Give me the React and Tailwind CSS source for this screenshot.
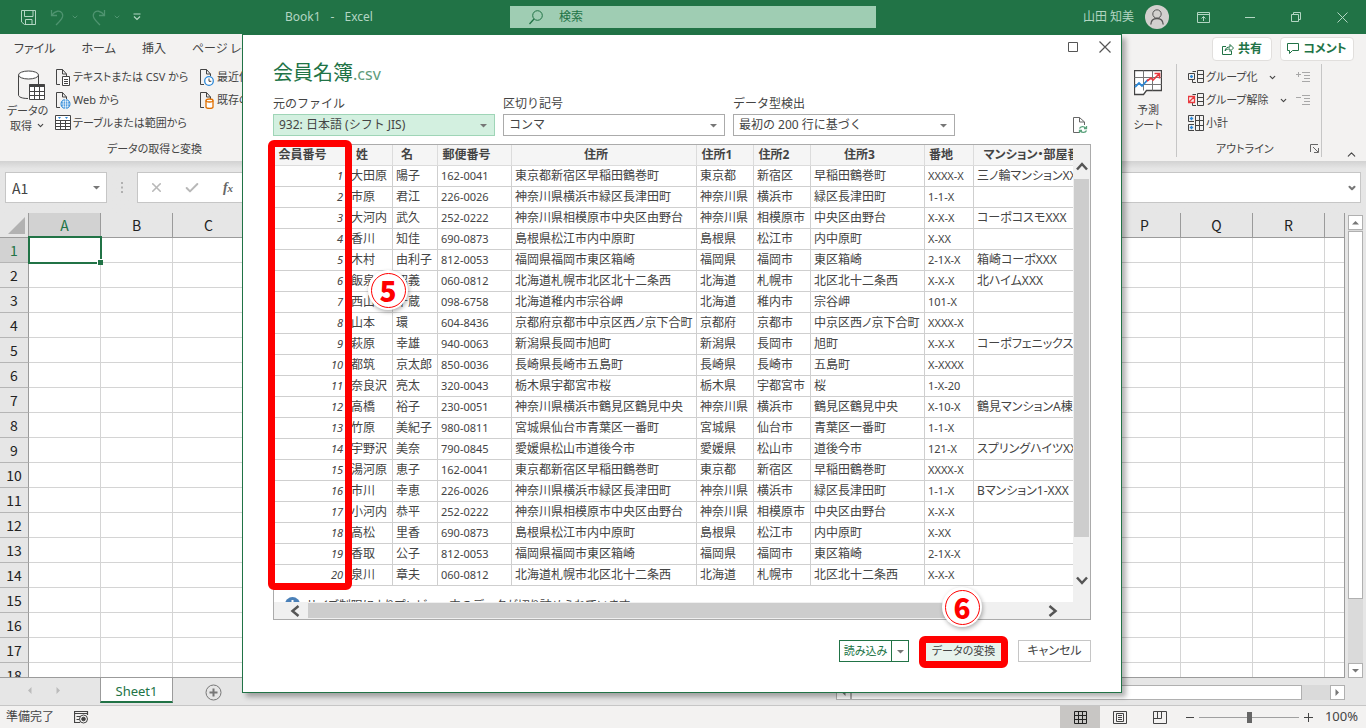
import React from "react";
import { ChevronDown, ChevronUp, X, Check } from "lucide-react";

const COLUMNS = "ABCDEFGHIJKLMNOPQRS".split("");
const SHEET_ROWS = Array.from({ length: 18 }, (_, i) => i + 1);

const MEMBER_HEADERS = [
  "会員番号", "姓", "名", "郵便番号", "住所", "住所1", "住所2", "住所3", "番地", "マンション・部屋番号",
];

const MEMBERS = [
  ["大田原", "陽子", "162-0041", "東京都新宿区早稲田鶴巻町", "東京都", "新宿区", "早稲田鶴巻町", "XXXX-X", "三ノ輪マンションXXX"],
  ["市原", "君江", "226-0026", "神奈川県横浜市緑区長津田町", "神奈川県", "横浜市", "緑区長津田町", "1-1-X", ""],
  ["大河内", "武久", "252-0222", "神奈川県相模原市中央区由野台", "神奈川県", "相模原市", "中央区由野台", "X-X-X", "コーポコスモXXX"],
  ["香川", "知佳", "690-0873", "島根県松江市内中原町", "島根県", "松江市", "内中原町", "X-XX", ""],
  ["木村", "由利子", "812-0053", "福岡県福岡市東区箱崎", "福岡県", "福岡市", "東区箱崎", "2-1X-X", "箱崎コーポXXX"],
  ["飯泉", "昭義", "060-0812", "北海道札幌市北区北十二条西", "北海道", "札幌市", "北区北十二条西", "X-X-X", "北ハイムXXX"],
  ["西山", "千蔵", "098-6758", "北海道稚内市宗谷岬", "北海道", "稚内市", "宗谷岬", "101-X", ""],
  ["山本", "環", "604-8436", "京都府京都市中京区西ノ京下合町", "京都府", "京都市", "中京区西ノ京下合町", "XXXX-X", ""],
  ["萩原", "幸雄", "940-0063", "新潟県長岡市旭町", "新潟県", "長岡市", "旭町", "X-X-X", "コーポフェニックスXXX"],
  ["都筑", "京太郎", "850-0036", "長崎県長崎市五島町", "長崎県", "長崎市", "五島町", "X-XXXX", ""],
  ["奈良沢", "亮太", "320-0043", "栃木県宇都宮市桜", "栃木県", "宇都宮市", "桜", "1-X-20", ""],
  ["高橋", "裕子", "230-0051", "神奈川県横浜市鶴見区鶴見中央", "神奈川県", "横浜市", "鶴見区鶴見中央", "X-10-X", "鶴見マンションA棟"],
  ["竹原", "美紀子", "980-0811", "宮城県仙台市青葉区一番町", "宮城県", "仙台市", "青葉区一番町", "1-1-X", ""],
  ["宇野沢", "美奈", "790-0845", "愛媛県松山市道後今市", "愛媛県", "松山市", "道後今市", "121-X", "スプリングハイツXXX"],
  ["湯河原", "恵子", "162-0041", "東京都新宿区早稲田鶴巻町", "東京都", "新宿区", "早稲田鶴巻町", "XXXX-X", ""],
  ["市川", "幸恵", "226-0026", "神奈川県横浜市緑区長津田町", "神奈川県", "横浜市", "緑区長津田町", "1-1-X", "Bマンション1-XXX"],
  ["小河内", "恭平", "252-0222", "神奈川県相模原市中央区由野台", "神奈川県", "相模原市", "中央区由野台", "X-X-X", ""],
  ["高松", "里香", "690-0873", "島根県松江市内中原町", "島根県", "松江市", "内中原町", "X-XX", ""],
  ["香取", "公子", "812-0053", "福岡県福岡市東区箱崎", "福岡県", "福岡市", "東区箱崎", "2-1X-X", ""],
  ["泉川", "章夫", "060-0812", "北海道札幌市北区北十二条西", "北海道", "札幌市", "北区北十二条西", "X-X-X", ""],
];

/* ----------------------------
   Icons
----------------------------- */
function Svg({ w, h, stroke = "#444", className = "", children }) {
  return (
    <svg
      width={w}
      height={h}
      viewBox={`0 0 ${w} ${h}`}
      fill="none"
      stroke={stroke}
      className={`shrink-0 ${className}`}
      aria-hidden="true"
    >
      {children}
    </svg>
  );
}

function Triangle({ dir = "down", color = "#777" }) {
  const d = {
    down: "M0 2H7L3.5 5.5Z",
    up: "M0 5.5H7L3.5 2Z",
    left: "M5.5 0V7L2 3.5Z",
    right: "M1.5 0V7L5 3.5Z",
  }[dir];
  return (
    <Svg w={7} h={7} stroke="none">
      <path d={d} fill={color} />
    </Svg>
  );
}

function PageIcon({ children }) {
  return (
    <Svg w={16} h={17}>
      <path d="M5 15.5H1.5V0.5H7.5L11.5 5V7M7.5 0.5V5H11.5" />
      {children}
    </Svg>
  );
}

const TextFileIcon = () => (
  <PageIcon>
    <path d="M7.5 7.5H14.5V16.5H7.5ZM9 10.5H13M9 12.5H13M9 14.5H13" fill="#fff" />
  </PageIcon>
);

const WebIcon = () => (
  <PageIcon>
    <circle cx="10.5" cy="12" r="4.5" fill="#2b88d8" stroke="#2b88d8" />
    <path d="M6 12H15M10.5 7.5V16.5M7 9.8H14M7 14.2H14" stroke="#fff" strokeWidth="0.7" />
    <ellipse cx="10.5" cy="12" rx="2.3" ry="4.5" stroke="#fff" strokeWidth="0.7" />
  </PageIcon>
);

const RecentIcon = () => (
  <PageIcon>
    <circle cx="10" cy="12" r="4.3" fill="#fff" stroke="#2b88d8" strokeWidth="1.3" />
    <path d="M10 9.5V12.3H12.3" />
  </PageIcon>
);

const ExistingIcon = () => (
  <PageIcon>
    <path d="M7 8.5V15C7 16.8 14 16.8 14 15V8.5" fill="#fff" stroke="#e07000" strokeWidth="1.3" />
    <ellipse cx="10.5" cy="8.5" rx="3.5" ry="1.5" fill="#fff" stroke="#e07000" strokeWidth="1.3" />
  </PageIcon>
);

const TableRangeIcon = () => (
  <Svg w={16} h={16}>
    <path d="M0.5 0.5H15.5V14.5H0.5ZM0.5 5.5H15.5M0.5 8.5H15.5M0.5 11.5H15.5M5.5 5.5V14.5M10.5 5.5V14.5" fill="#fff" />
    <path d="M3 2L6 2L4.5 4ZM10 2H13L11.5 4Z" fill="#2b88d8" stroke="none" />
  </Svg>
);

const GetDataIcon = () => (
  <Svg w={28} h={31}>
    <path d="M1.5 5V25C1.5 27 5 28.5 11 28.5M21.5 5V14" fill="none" />
    <ellipse cx="11.5" cy="5" rx="10" ry="4" fill="#fff" />
    <path d="M12.5 14.5H27.5V29.5H12.5Z" fill="#fff" />
    <path d="M12.5 15.5H27.5" strokeWidth="3" />
    <path d="M12.5 21.5H27.5M12.5 25.5H27.5M17.5 16V29.5M22.5 16V29.5" />
  </Svg>
);

const ForecastIcon = () => (
  <Svg w={28} h={26}>
    <path d="M0.5 0.5H27.5V20.5H12.5L9.5 24.5H0.5Z" fill="#fff" strokeWidth="1.3" />
    <path d="M0.5 7.5H27.5M0.5 14.5H27.5M9.5 0.5V20.5M18.5 0.5V20.5" stroke="#777" />
    <path d="M1 17L5 13L8 16L14 9.5" stroke="#2b88d8" strokeWidth="1.8" />
    <path d="M13 11L17 8L19 10L25.5 3.5M20.5 3.5H25.5V8.5" stroke="#e8383d" strokeWidth="1.6" />
  </Svg>
);

const GroupIcon = () => (
  <Svg w={16} h={14}>
    <path d="M9.5 0.5H15.5V12.5H9.5ZM9.5 4.5H15.5M9.5 8.5H15.5M8 1.5H4.5M8 12.5H4.5V10" />
    <path d="M0.5 3.5H6.5V9.5H0.5Z" />
    <path d="M2 6.5H5M3.5 5V8" stroke="#2b88d8" strokeWidth="1.4" />
  </Svg>
);

const UngroupIcon = () => (
  <Svg w={16} h={14}>
    <path d="M9.5 0.5H15.5V12.5H9.5ZM9.5 4.5H15.5M9.5 8.5H15.5M8 1.5H4.5M8 12.5H4.5V10" />
    <path d="M0.5 3.5H6.5V9.5H0.5ZM1 9L6 4" stroke="#e8383d" strokeWidth="1.3" />
  </Svg>
);

const SubtotalIcon = () => (
  <Svg w={16} h={16}>
    <path d="M7.5 0.5H15.5V15.5H7.5ZM7.5 5.5H15.5M7.5 10.5H15.5M11.5 0.5V15.5" />
    <path d="M6 0.5H0.5V6.5H6M6 9.5H0.5V15.5H6" />
    <path d="M1.8 3.5H5.2M3.5 1.8V5.2M1.8 12.5H5.2M3.5 10.8V14.2" stroke="#2b88d8" strokeWidth="1.4" />
  </Svg>
);

const DetailIcon = ({ plus }) => (
  <Svg w={15} h={12} stroke="#a8a8a8">
    <path d="M6 1.5H14M8 4.5H14M8 7.5H14M6 10.5H14M0 3.5H5" />
    {plus && <path d="M2.5 1V6" />}
  </Svg>
);

/* ----------------------------
   Title bar
----------------------------- */
function TitleBar() {
  const tint = "#b3d6c3";
  return (
    <header className="grid h-[34px] shrink-0 grid-cols-[510fr_366fr_490fr] items-center bg-[#217346] text-[12px] text-[#b3d6c3]">
      <div className="flex items-center pl-5">
        <button aria-label="上書き保存">
          <Svg w={17} h={17} stroke={tint} className="mt-px">
            <path d="M1.5 1.5H15.5V15.5H4.5L1.5 13ZM4.5 1.5V7.5H13V1.5M5.5 15.5V10.5H12V15.5" />
          </Svg>
        </button>
        <button aria-label="元に戻す" className="ml-3 flex items-center gap-1.5 text-[#4f9470]">
          <Svg w={16} h={17} stroke="#4f9470">
            <path d="M2.5 1V6.5H8M2.5 6.5C6 1.5 11 1 13 4C15.500 8 11 12 7 16" strokeWidth="1.3" />
          </Svg>
          <ChevronDown size={8} strokeWidth={3} />
        </button>
        <button aria-label="やり直し" className="ml-3 flex items-center gap-1.5 text-[#4f9470]">
          <Svg w={16} h={17} stroke="#4f9470">
            <path d="M13.500 1V6.500H8M13.500 6.500C10 1.500 5 1 3 4C0.500 8 5 12 9 16" strokeWidth="1.3" />
          </Svg>
          <ChevronDown size={8} strokeWidth={3} />
        </button>
        <button aria-label="クイック アクセス ツール バーのカスタマイズ" className="ml-3">
          <Svg w={8} h={8} stroke={tint}>
            <path d="M0.500 1H7.500M1 3.500L4 6.500L7 3.500" strokeWidth="1.2" />
          </Svg>
        </button>
        <div className="ml-36 flex gap-2.5 whitespace-pre">
          <span>Book1</span>
          <span>-</span>
          <span>Excel</span>
        </div>
      </div>
      <label className="flex h-[22px] items-center gap-4 bg-[#9fcdb3] pl-[19px] text-[#217346]">
        <Svg w={14} h={15} stroke="#217346">
          <circle cx="8.500" cy="5.500" r="4.800" />
          <path d="M5 9L0.500 14" strokeWidth="1.3" />
        </Svg>
        <input
          aria-label="検索"
          placeholder="検索"
          className="w-full bg-transparent outline-none placeholder:text-[#217346]"
        />
      </label>
      <div className="flex items-center justify-end pr-[18px]">
        <span>山田 知美</span>
        <span className="ml-[11px] flex size-6 items-center justify-center rounded-full bg-[#d2d0ce]">
          <Svg w={14} h={16} stroke="#555">
            <circle cx="7" cy="5" r="4.200" />
            <path d="M0.800 15.500C1 11 4 9.500 7 9.500S13 11 13.200 15.500" strokeWidth="1.3" />
          </Svg>
        </span>
        <button aria-label="リボンの表示オプション" className="ml-7">
          <Svg w={13} h={11} stroke={tint}>
            <path d="M0.500 0.500H12.500V10.500H0.500ZM0.500 2.500H12.500M6.500 9V4.500M4.500 6.500L6.500 4.500L8.500 6.500" />
          </Svg>
        </button>
        <button aria-label="最小化" className="ml-[35px]">
          <Svg w={10} h={10} stroke={tint}>
            <path d="M0 5.500H10" />
          </Svg>
        </button>
        <button aria-label="元に戻す (縮小)" className="ml-9">
          <Svg w={10} h={10} stroke={tint}>
            <path d="M0.500 2.500H7.500V9.500H0.500ZM2.500 2.500V0.500H9.500V7.500H7.500" />
          </Svg>
        </button>
        <button aria-label="閉じる" className="ml-9">
          <Svg w={11} h={11} stroke={tint}>
            <path d="M0.500 0.500L10.500 10.500M10.500 0.500L0.500 10.500" />
          </Svg>
        </button>
      </div>
    </header>
  );
}

/* ----------------------------
   Ribbon
----------------------------- */
function RibbonItem({ icon, label, arrow }) {
  return (
    <button className="flex h-[23px] items-center gap-0.5 whitespace-nowrap">
      <span className="flex w-4 justify-center">{icon}</span>
      {label}
      {arrow && <ChevronDown size={9} strokeWidth={3} className="ml-2" />}
    </button>
  );
}

function Ribbon() {
  return (
    <section className="flex h-[127px] shrink-0 flex-col bg-[#f3f2f1] text-[11px] text-[#444] [font-feature-settings:'palt']">
      <div className="flex h-[34px] items-center justify-between pr-3 pl-3.5 text-[12px]">
        <nav className="flex gap-[26px]">
          <a href="#file">ファイル</a>
          <a href="#home">ホーム</a>
          <a href="#insert">挿入</a>
          <a href="#layout">ページ レイアウト</a>
        </nav>
        <div className="flex gap-2 font-bold text-[#217346]">
          <button className="flex h-6 w-[60px] items-center justify-center gap-1 rounded-sm border border-[#e1dfdd] bg-white">
            <Svg w={12} h={12} stroke="#217346">
              <path d="M4 3.500H0.500V11.500H9.500V8M3 8C3.500 5 5 4 8 4V1.500L11.500 5L8 8.500V6C6 6 4.500 6 3 8Z" />
            </Svg>
            共有
          </button>
          <button className="flex h-6 w-[74px] items-center justify-center gap-1 rounded-sm border border-[#e1dfdd] bg-white">
            <Svg w={12} h={11} stroke="#217346">
              <path d="M0.500 0.500H11.500V7.500H5.500L2.500 10.500V7.500H0.500Z" />
            </Svg>
            コメント
          </button>
        </div>
      </div>

      <div className="flex flex-1">
        {/* データの取得と変換 */}
        <div className="flex w-[309px] flex-col">
          <div className="flex pt-0.5">
            <button className="flex w-[55px] flex-col items-center pt-1 leading-[15px]">
              <span className="pb-0.5 pl-1.5">
                <GetDataIcon />
              </span>
              <span>データの</span>
              <span className="flex items-center gap-1">
                取得
                <ChevronDown size={9} strokeWidth={3} />
              </span>
            </button>
            <div className="flex w-[144px] flex-col">
              <RibbonItem icon={<TextFileIcon />} label="テキストまたは CSV から" />
              <RibbonItem icon={<WebIcon />} label="Web から" />
              <RibbonItem icon={<TableRangeIcon />} label="テーブルまたは範囲から" />
            </div>
            <div className="flex flex-col">
              <RibbonItem icon={<RecentIcon />} label="最近使ったソース" />
              <RibbonItem icon={<ExistingIcon />} label="既存の接続" />
            </div>
          </div>
          <div className="mt-1.5 text-center">データの取得と変換</div>
        </div>

        {/* 予測シート and アウトライン */}
        <div className="ml-auto flex pr-11">
          <button className="mr-[5px] flex w-[46px] flex-col items-center pt-1.5 leading-[15px]">
            <ForecastIcon />
            <span className="pt-1.5">予測</span>
            <span>シート</span>
          </button>
          <div className="mb-1 flex w-[146px] flex-col border-x border-[#c6c6c6] pt-0.5 pl-[11px]">
            <div className="flex">
              <div className="flex w-[108px] flex-col">
                <RibbonItem icon={<GroupIcon />} label="グループ化" arrow />
                <RibbonItem icon={<UngroupIcon />} label="グループ解除" arrow />
                <RibbonItem icon={<SubtotalIcon />} label="小計" />
              </div>
              <div className="flex flex-col">
                <button aria-label="詳細データの表示" className="flex h-[23px] items-center">
                  <DetailIcon plus />
                </button>
                <button aria-label="詳細を表示しない" className="flex h-[23px] items-center">
                  <DetailIcon />
                </button>
              </div>
            </div>
            <div className="mt-1.5 flex items-center justify-between pr-0.5 pl-7">
              アウトライン
              <button aria-label="アウトラインの設定">
                <Svg w={9} h={9} stroke="#666">
                  <path d="M0.500 8V0.500H8M3 3L8 8M8.500 4V8.500H4" />
                </Svg>
              </button>
            </div>
          </div>
        </div>
      </div>
      <button aria-label="リボンを折りたたむ" className="absolute top-[148px] right-2">
        <ChevronUp size={13} />
      </button>
    </section>
  );
}

/* ----------------------------
   Formula bar
----------------------------- */
function FormulaBar() {
  return (
    <section className="flex h-[52px] shrink-0 items-start bg-linear-to-b from-[#d2d2d2] to-[#e6e6e6] to-15% px-[5px] pt-[11px]">
      <div className="flex h-[31px] w-[102px] items-center border border-[#c6c6c6] bg-white pr-1.5">
        <input
          aria-label="名前ボックス"
          defaultValue="A1"
          className="w-full pt-0.5 pl-1.5 font-['Noto_Sans_CJK_JP',sans-serif] text-[14px] text-[#444] outline-none"
        />
        <Triangle />
      </div>
      <div className="flex h-[31px] w-[30px] items-center justify-center">
        <Svg w={2} h={11} stroke="none">
          <path d="M0 0H2V2H0ZM0 4.500H2V6.500H0ZM0 9H2V11H0Z" fill="#b0b0b0" />
        </Svg>
      </div>
      <div className="flex h-[31px] flex-1 items-center border border-[#c6c6c6] bg-white pr-[3px]">
        <button aria-label="キャンセル" className="flex w-9 justify-center text-[#b8b8b8]">
          <X size={15} strokeWidth={2.5} />
        </button>
        <button aria-label="入力" className="flex w-9 justify-center text-[#b8b8b8]">
          <Check size={16} strokeWidth={3} />
        </button>
        <button
          aria-label="関数の挿入"
          className="w-9 text-center font-['Liberation_Serif',serif] text-[14px] font-bold text-[#666] italic"
        >
          f<span className="text-[11px]">x</span>
        </button>
        <input aria-label="数式バー" className="min-w-0 flex-1 outline-none" />
        <ChevronDown size={10} strokeWidth={5} className="text-[#777]" />
      </div>
    </section>
  );
}

/* ----------------------------
   Worksheet
----------------------------- */
function Worksheet() {
  return (
    <section className="flex min-h-0 flex-1 bg-[#e6e6e6]">
      <div className="min-w-0 flex-1 overflow-hidden border-r border-b border-[#9b9b9b] bg-[#e6e6e6]">
        <table className="w-[1397px] table-fixed border-separate border-spacing-0 font-['Noto_Sans_CJK_JP',sans-serif] text-[14px] leading-[20px] text-[#222]">
          <thead>
            <tr className="h-[25px]">
              <th className="w-[29px] border-r border-b border-[#9b9b9b] p-0">
                <Svg w={17} h={17} stroke="none" className="ml-[8px]">
                  <path d="M17 0V17H0Z" fill="#b2b2b2" />
                </Svg>
              </th>
              {COLUMNS.map((c) => (
                <th
                  key={c}
                  className={`w-[72px] border-r border-b border-[#9b9b9b] p-0 font-normal ${
                    c === "A" ? "bg-[#d2d2d2] text-[#217346]" : ""
                  }`}
                >
                  {c}
                </th>
              ))}
            </tr>
          </thead>
          <tbody>
            {SHEET_ROWS.map((r) => (
              <tr key={r} className="h-[25px]">
                <th
                  className={`border-r border-b border-r-[#9b9b9b] border-b-[#b5b5b5] p-0 font-normal ${
                    r === 1 ? "bg-[#d2d2d2] text-[#217346]" : ""
                  }`}
                >
                  {r}
                </th>
                {COLUMNS.map((c) => (
                  <td key={c} className="relative border-r border-b border-[#d4d4d4] bg-white p-0">
                    {r === 1 && c === "A" && (
                      <span className="absolute -inset-0.5 -left-px z-10 border-2 border-[#217346]">
                        <span className="absolute -right-[3px] -bottom-[3px] size-[6px] border-t border-l border-white bg-[#217346]" />
                      </span>
                    )}
                  </td>
                ))}
              </tr>
            ))}
          </tbody>
        </table>
      </div>
      <div className="flex w-[21px] flex-col items-center bg-[#e6e6e6] pt-0.5">
        <button aria-label="上へスクロール" className="flex h-[15px] w-[15px] items-center justify-center border border-[#b0b0b0] bg-white">
          <Triangle dir="up" />
        </button>
        <div className="w-[15px] flex-1 bg-[#dadada]">
          <div className="mt-px h-[85%] border border-[#b0b0b0] bg-white" />
        </div>
        <button aria-label="下へスクロール" className="flex h-[15px] w-[15px] items-center justify-center border border-[#b0b0b0] bg-white">
          <Triangle />
        </button>
      </div>
    </section>
  );
}

function SheetTabs() {
  return (
    <section className="flex h-7 shrink-0 items-start border-b border-[#c6c6c6] bg-[#e6e6e6]">
      <div className="flex h-[25px] w-[100px] items-center gap-[22px] pl-[26px]">
        <Triangle dir="left" color="#bbb" />
        <Triangle dir="right" color="#bbb" />
      </div>
      <button className="h-[25px] w-[73px] border-x border-b-2 border-x-[#9b9b9b] border-b-[#217346] bg-white pt-1 text-[13px] text-[#217346]">
        Sheet1
      </button>
      <button aria-label="新しいシート" className="ml-8 pt-1.5">
        <Svg w={17} h={17} stroke="#777">
          <circle cx="8.500" cy="8.500" r="7.500" />
          <path d="M4.500 8.500H12.500M8.500 4.500V12.500" strokeWidth="2" />
        </Svg>
      </button>
      <div className="ml-auto flex w-[509px] pt-[7px]">
        <button aria-label="左へスクロール" className="flex h-[15px] w-[15px] items-center justify-center border border-[#b0b0b0] bg-white">
          <Triangle dir="left" />
        </button>
        <div className="h-[15px] flex-1 bg-[#dadada] pr-7">
          <div className="h-full border border-[#b0b0b0] bg-white" />
        </div>
        <button aria-label="右へスクロール" className="flex h-[15px] w-[15px] items-center justify-center border border-[#b0b0b0] bg-white">
          <Triangle dir="right" />
        </button>
      </div>
      <div className="w-[21px]" />
    </section>
  );
}

function StatusBar() {
  return (
    <footer className="flex h-[22px] shrink-0 items-center bg-[#f3f2f1] pl-1.5 text-[12px] text-[#444]">
      <span>準備完了</span>
      <button aria-label="マクロの記録" className="ml-5">
        <Svg w={15} h={13}>
          <path d="M6 11.500H0.500V0.500H13.500V4M0.500 2.500H13.500M2.500 5.500H6M2.500 8.500H5" strokeWidth="1.2" />
          <circle cx="9.500" cy="8" r="4" />
          <circle cx="9.500" cy="8" r="1.800" fill="#444" />
        </Svg>
      </button>
      <div className="ml-auto flex items-center">
        <button aria-label="標準" className="flex h-[22px] w-10 items-center justify-center bg-[#c8c6c4]">
          <Svg w={13} h={13} stroke="#222">
            <path d="M0.500 0.500H12.500V12.500H0.500ZM0.500 4.500H12.500M0.500 8.500H12.500M4.500 0.500V12.500M8.500 0.500V12.500" />
          </Svg>
        </button>
        <button aria-label="ページ レイアウト" className="flex h-[22px] w-10 items-center justify-center">
          <Svg w={14} h={13}>
            <path d="M0.500 0.500H13.500V12.500H0.500ZM3.500 2.500H10.500V10.500H3.500ZM5 4.500H9M5 6.500H9M5 8.500H9" />
          </Svg>
        </button>
        <button aria-label="改ページ プレビュー" className="flex h-[22px] w-10 items-center justify-center">
          <Svg w={14} h={13}>
            <path d="M0.500 0.500H13.500V12.500H0.500ZM0.500 7.500H8.500V0.500M4.500 0.500V7.500" />
          </Svg>
        </button>
        <button aria-label="縮小" className="ml-1.5">
          <Svg w={8} h={9}>
            <path d="M0 4.500H8" />
          </Svg>
        </button>
        <input
          type="range"
          aria-label="ズーム"
          className="mx-[5px] h-[11px] w-[100px] appearance-none bg-transparent [&::-webkit-slider-runnable-track]:h-px [&::-webkit-slider-runnable-track]:bg-[#a0a0a0] [&::-webkit-slider-thumb]:-mt-[5px] [&::-webkit-slider-thumb]:h-[11px] [&::-webkit-slider-thumb]:w-[5px] [&::-webkit-slider-thumb]:appearance-none [&::-webkit-slider-thumb]:bg-[#666]"
        />
        <button aria-label="拡大">
          <Svg w={9} h={9}>
            <path d="M0 4.500H9M4.500 0V9" />
          </Svg>
        </button>
        <span className="w-[53px] pr-2 text-right text-[13px]">100%</span>
      </div>
    </footer>
  );
}

/* ----------------------------
   CSV import dialog
----------------------------- */
function Field({ id, label, value, active }) {
  return (
    <div className="w-[222px]">
      <label htmlFor={id} className="block h-[19px] leading-[17px]">
        {label}
      </label>
      <div className="relative">
        <select
          id={id}
          className={`h-[22px] w-full appearance-none border pl-[5px] leading-[18px] outline-none ${
            active ? "border-[#9fd5b7] bg-[#d3f0e0]" : "border-[#ababab] bg-white"
          }`}
        >
          <option>{value}</option>
        </select>
        <span className="pointer-events-none absolute inset-y-0 right-2 flex items-center">
          <Triangle />
        </span>
      </div>
    </div>
  );
}

function Marker({ children, className }) {
  return (
    <div
      className={`absolute z-20 flex size-10 items-center justify-center rounded-full bg-white shadow-[1px_2px_4px_rgba(0,0,0,0.3)] ${className}`}
    >
      <div className="flex size-[35px] items-center justify-center rounded-full border border-[#ff0000] font-['Noto_Sans_CJK_JP',sans-serif] text-[28px] leading-none font-black text-[#ff0000]">
        {children}
      </div>
    </div>
  );
}

function MemberTable() {
  return (
    <table className="w-[844px] table-fixed border-separate border-spacing-0 whitespace-nowrap [font-feature-settings:'palt']">
      <colgroup>
        <col className="w-[74px]" />
        <col className="w-[45px]" />
        <col className="w-[45px]" />
        <col className="w-[74px]" />
        <col className="w-[185px]" />
        <col className="w-[57px]" />
        <col className="w-[57px]" />
        <col className="w-[114px]" />
        <col className="w-[49px]" />
        <col className="w-[144px]" />
      </colgroup>
      <thead>
        <tr className="h-[21px]">
          {MEMBER_HEADERS.map((h) => (
            <th
              key={h}
              className="border-r border-b border-[#dcdcdc] bg-[#f5f5f5] p-0 pr-4 text-center leading-[18px] font-bold"
            >
              {h}
            </th>
          ))}
        </tr>
      </thead>
      <tbody>
        {MEMBERS.map((row, i) => (
          <tr key={i} className="h-[21px]">
            <td className="border-r border-b border-[#cfcfcf] p-0 pr-1 text-right text-[11px] leading-[18px] italic">{i + 1}</td>
            {row.map((cell, j) => (
              <td
                key={j}
                className={`border-r border-b border-[#cfcfcf] p-0 pl-[3px] leading-[18px] ${
                  j === 2 || j === 7 ? "text-[11px]" : ""
                }`}
              >
                {cell}
              </td>
            ))}
          </tr>
        ))}
      </tbody>
    </table>
  );
}

function ImportDialog() {
  return (
    <div
      role="dialog"
      aria-label="会員名簿.csv"
      className="relative flex w-[880px] flex-col border border-[#217346] bg-white px-[30px] pb-[30px] text-[12px] text-[#444] shadow-[4px_4px_5px_rgba(0,0,0,0.3)]"
    >
      <div className="-mr-5 flex h-6 items-center justify-end gap-[21px]">
        <button aria-label="最大化">
          <Svg w={10} h={10} stroke="#555">
            <path d="M0.500 0.500H9.500V9.500H0.500Z" />
          </Svg>
        </button>
        <button aria-label="閉じる">
          <Svg w={12} h={12} stroke="#555">
            <path d="M0.500 0.500L11.500 11.500M11.500 0.500L0.500 11.500" strokeWidth="1.2" />
          </Svg>
        </button>
      </div>

      <h1 className="h-9 text-[20px] leading-[28px] text-[#217346]">
        会員名簿<span className="text-[16px] text-[#5f9c7b]">.csv</span>
      </h1>

      <div className="flex gap-2">
        <Field id="origin" label="元のファイル" value="932: 日本語 (シフト JIS)" active />
        <Field id="delimiter" label="区切り記号" value="コンマ" />
        <Field id="detect" label="データ型検出" value="最初の 200 行に基づく" />
        <button aria-label="最新の情報に更新" className="mt-auto mb-0.5 ml-auto pr-[3px]">
          <Svg w={16} h={17} stroke="#666">
            <path d="M7 15.500H1.500V0.500H7.500L12.500 5V8M7.500 0.500V5H12.500" />
            <path d="M7.500 11.500C8.500 9 12 9 13.500 11M14.500 9V11.500H12M14.500 13.500C13.500 16 10 16 8.500 14M7.500 16V13.500H10" stroke="#5aa27c" strokeWidth="1.3" />
          </Svg>
        </button>
      </div>

      {/* Preview */}
      <div className="mt-2 h-[476px] border border-[#ababab]">
        <div className="flex h-[457px] bg-[#f0f0f0]">
          <div className="flex-1 overflow-hidden bg-white">
            <MemberTable />
            <p className="flex gap-1.5 pt-[11px] pl-[11px] leading-[18px] whitespace-nowrap [font-feature-settings:'palt']">
              <svg width="15" height="15" viewBox="0 0 15 15" aria-hidden="true">
                <circle cx="7.500" cy="7.500" r="7.500" fill="#4a80b8" />
                <path d="M6.500 3H8.500V5H6.500ZM6.500 6.500H8.500V12H6.500Z" fill="#fff" />
              </svg>
              サイズ制限によりプレビュー中のデータが切り詰められています。
            </p>
          </div>
          <div className="flex w-[17px] shrink-0 flex-col items-center pt-4 pb-4">
            <Svg w={12} h={10} stroke="#555">
              <path d="M1 8.500L6 3L11 8.500" strokeWidth="2.500" />
            </Svg>
            <div className="mt-2 h-[358px] w-[15px] bg-[#cdcdcd]" />
            <Svg w={12} h={10} stroke="#555" className="mt-auto">
              <path d="M1 1.500L6 7L11 1.500" strokeWidth="2.500" />
            </Svg>
          </div>
        </div>
        <div className="flex h-[17px] items-center bg-[#f0f0f0] pr-8 pl-4">
          <Svg w={10} h={12} stroke="#555">
            <path d="M8.500 1L2.500 6L8.500 11" strokeWidth="2.500" />
          </Svg>
          <div className="mr-3 ml-2 h-[15px] w-[660px] bg-[#cdcdcd]" />
          <Svg w={10} h={12} stroke="#555" className="ml-auto">
            <path d="M1.500 1L7.500 6L1.500 11" strokeWidth="2.500" />
          </Svg>
        </div>
      </div>

      {/* Footer buttons */}
      <div className="mt-5 flex items-center justify-end text-[11px] [font-feature-settings:'palt']">
        <div className="flex h-[22px] w-[70px] border border-[#217346] text-[#217346]">
          <button className="flex-1 leading-[18px]">読み込み</button>
          <button aria-label="読み込みオプション" className="flex w-[17px] items-center justify-center border-l border-[#217346]">
            <Triangle />
          </button>
        </div>
        <div className="relative ml-[17px]">
          <button className="h-[22px] w-[75px] bg-[#e8f3ed] leading-[18px]">データの変換</button>
          <div className="pointer-events-none absolute -inset-x-[7px] -top-1 -bottom-1.5 rounded-md border-[7px] border-[#ff0000]" />
        </div>
        <button className="ml-[17px] h-[22px] w-[73px] border border-[#c6c6c6] text-[12px] leading-[18px]">キャンセル</button>
      </div>

      {/* Step annotations */}
      <div className="pointer-events-none absolute top-[105px] left-[25px] z-10 h-[450px] w-[84px] rounded-md border-[7px] border-[#ff0000]" />
      <Marker className="top-[235px] left-[125px]">5</Marker>
      <Marker className="top-[552px] left-[699px]">6</Marker>
    </div>
  );
}

export default function App() {
  return (
    <div className="relative flex h-screen flex-col overflow-hidden bg-[#e6e6e6] font-['Noto_Sans','Noto_Sans_CJK_JP',sans-serif] leading-normal">
      <TitleBar />
      <Ribbon />
      <FormulaBar />
      <Worksheet />
      <SheetTabs />
      <StatusBar />
      <div className="absolute inset-x-0 top-[34px] z-30 flex justify-center pr-0.5">
        <ImportDialog />
      </div>
    </div>
  );
}
